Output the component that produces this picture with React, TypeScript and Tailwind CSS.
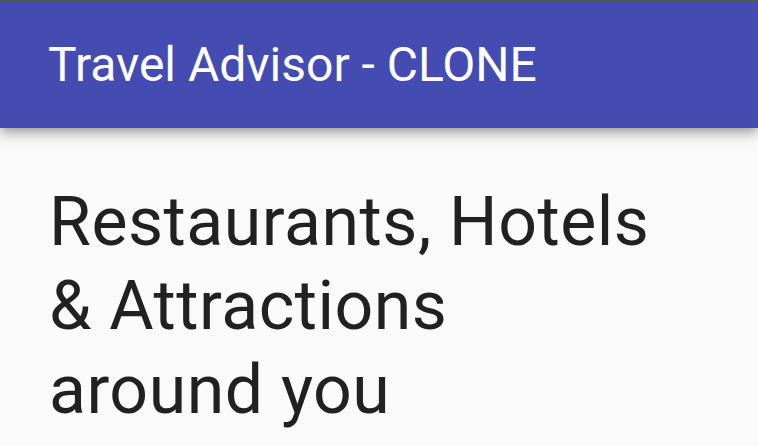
export default function App() {
  return (
    <div className="min-h-[446px] bg-[#fafafa] font-['Roboto',sans-serif]">
      <div className="h-px bg-[#5a5a5a]" />
      <header className="relative z-10 flex h-[127px] items-center bg-[#454cb1] px-[48px] shadow-[0px_4px_8px_-2px_rgba(0,0,0,0.2),0px_8px_10px_0px_rgba(0,0,0,0.14),0px_2px_20px_0px_rgba(0,0,0,0.12)]">
        <h1 className="text-[48px] leading-[64px] font-normal text-white">Travel Advisor - CLONE</h1>
      </header>
      <main className="px-[49px] pt-[52px]">
        <h2 className="max-w-[610px] text-[68px] leading-[84px] font-normal tracking-[0.5px] text-[#212121]">
          Restaurants, Hotels &amp; Attractions around you
        </h2>
      </main>
    </div>
  );
}
